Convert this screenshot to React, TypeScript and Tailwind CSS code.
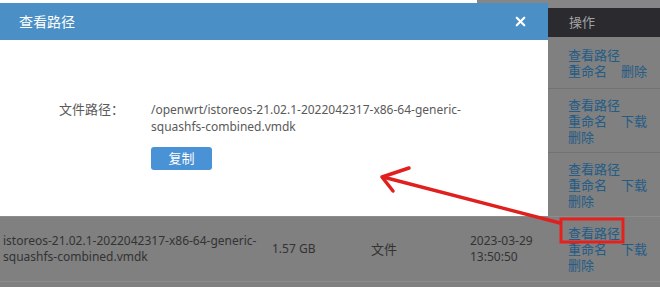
import { X } from 'lucide-react'

const cjk = '"Noto Sans CJK SC"'

type Row = { h: string; name?: string[]; size?: string; type?: string; date?: string[]; download: boolean; line: string }

const rows: Row[] = [
  { h: 'h-[51px]', download: false, line: 'border-transparent' },
  { h: 'h-[64px]', download: true, line: 'border-[#737373]' },
  { h: 'h-[64px]', download: true, line: 'border-[#737373]' },
  {
    h: 'h-[65px]',
    name: ['istoreos-21.02.1-2022042317-x86-64-generic-', 'squashfs-combined.vmdk'],
    size: '1.57 GB',
    type: '文件',
    date: ['2023-03-29', '13:50:50'],
    download: true,
    line: 'border-[#8c8c8c]',
  },
]

export default function App() {
  return (
    <div
      className="relative w-[660px] h-[287px] overflow-hidden bg-[#808080] text-[#333333]"
      style={{ fontFamily: `"Noto Sans", ${cjk}, sans-serif` }}
    >
      {/* page beneath the dialog (already dimmed) */}
      <div className="h-[8px] bg-[#868686]" />
      <div className="h-[29px] bg-[#2a2a2f] flex items-center text-[13px] text-[#a3a3a3]">
        <div className="pl-[569px]">操作</div>
      </div>
      {rows.map((r, i) => (
        <div key={i} className={`${r.h} flex items-center border-t ${r.line} text-[12px] leading-[16px]`}>
          <div className="w-[262px] pl-[3px]">
            {r.name?.map((l) => <div key={l}>{l}</div>)}
          </div>
          <div className="w-[99px] pl-[10px]">{r.size}</div>
          <div className="w-[99px] pl-[10px] text-[13px]">{r.type}</div>
          <div className="w-[98px] pl-[10px]">
            {r.date?.map((l) => <div key={l}>{l}</div>)}
          </div>
          <div className="pl-[10px] text-[13px] leading-[16px] text-[#235c86]">
            <div>查看路径</div>
            <div className="flex gap-[14px]">
              <span>重命名</span>
              {r.download ? <span>下载</span> : <span>删除</span>}
            </div>
            {r.download && <div>删除</div>}
          </div>
        </div>
      ))}
      <div className="border-t border-[#8c8c8c]" />

      <div className="absolute top-0 left-0 w-[477px] h-[3px] bg-white" />

      {/* dialog */}
      <div className="absolute left-0 top-[3px] w-[548px] h-[213px] bg-white flex flex-col">
        <div className="h-[37px] bg-[#4a8fc5] flex items-center justify-between pl-[19px] pr-[20px] text-white">
          <span className="text-[14px]">查看路径</span>
          <X className="w-[15px] h-[15px]" strokeWidth={3.5} />
        </div>
        <div className="flex pt-[61px] text-[#5a5a5a]">
          <div className="w-[124px] text-right text-[13px] leading-[17px]">文件路径：</div>
          <div className="pl-[27px]">
            <div className="text-[12px] leading-[17px]">
              <div>/openwrt/istoreos-21.02.1-2022042317-x86-64-generic-</div>
              <div>squashfs-combined.vmdk</div>
            </div>
            <button className="mt-[12px] w-[61px] h-[23px] rounded-[3px] bg-[#4a92d6] text-white text-[13px] leading-none">
              复制
            </button>
          </div>
        </div>
      </div>

      {/* annotation */}
      <svg className="absolute inset-0 pointer-events-none" width="660" height="287" viewBox="0 0 660 287">
        <rect x="561" y="219" width="62" height="23" fill="none" stroke="#e3221f" strokeWidth="3" />
        <g stroke="#e0201f" strokeWidth="3.5" strokeLinecap="round" strokeLinejoin="round" fill="none">
          <line x1="560" y1="223" x2="383" y2="177" />
          <polyline points="409,168 382,177 393,191" />
        </g>
      </svg>
    </div>
  )
}
